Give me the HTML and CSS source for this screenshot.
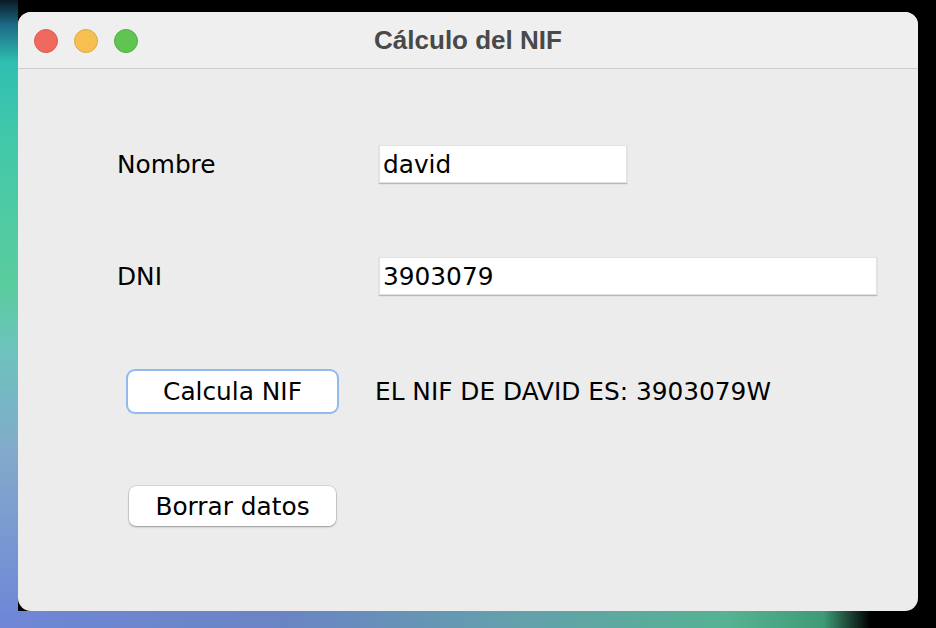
FILE: index.html
```html
<!DOCTYPE html>
<html lang="es">
<head>
<meta charset="utf-8">
<title>Cálculo del NIF</title>
<link rel="stylesheet" href="styles.css">
</head>
<body>
<div class="desktop">
  <div class="window">
    <div class="titlebar">
      <div class="lights">
        <span class="light red"></span>
        <span class="light yellow"></span>
        <span class="light green"></span>
      </div>
      <div class="title">Cálculo del NIF</div>
    </div>
    <div class="content">
      <div class="row row-nombre">
        <label class="label">Nombre</label>
        <div class="field field-short">david</div>
      </div>
      <div class="row row-dni">
        <label class="label">DNI</label>
        <div class="field field-long">3903079</div>
      </div>
      <div class="row row-calc">
        <button class="btn btn-focus">Calcula NIF</button>
        <span class="result">EL NIF DE DAVID ES: 3903079W</span>
      </div>
      <div class="row row-clear">
        <button class="btn">Borrar datos</button>
      </div>
    </div>
  </div>
</div>
</body>
</html>
```

FILE: styles.css
```css
html, body {
  margin: 0;
  padding: 0;
}
body {
  width: 936px;
  height: 628px;
  overflow: hidden;
  background: #000;
}
.desktop {
  width: 936px;
  height: 628px;
  box-sizing: border-box;
  padding: 12px 18px 17px 18px;
  background:
    linear-gradient(90deg, #6f87d6 0%, #6a84c4 30%, #64a0ac 55%, #55b392 78%, #3f9a76 88%, #000 93%) bottom / 100% 17px no-repeat,
    linear-gradient(180deg, #0a1a25 0%, #1c6a86 4%, #2fc0b2 10%, #42c8aa 22%, #5acc9e 45%, #6cc4bc 55%, #82aacb 72%, #6f85d8 100%) left / 18px 100% no-repeat,
    #000;
}
.window {
  width: 900px;
  height: 599px;
  background: #ececec;
  border-radius: 13px;
  overflow: hidden;
  display: flex;
  flex-direction: column;
}
.titlebar {
  height: 56px;
  flex: none;
  background: #efeff0;
  border-bottom: 1px solid #cfcfcf;
  display: flex;
  align-items: center;
  position: relative;
}
.lights {
  display: flex;
  gap: 16px;
  padding-left: 16px;
  padding-top: 2px;
}
.light {
  width: 24px;
  height: 24px;
  border-radius: 50%;
  box-sizing: border-box;
}
.red { background: #ee6a5f; border: 1px solid #dd5a50; }
.yellow { background: #f6bf4f; border: 1px solid #e0a93e; }
.green { background: #60c453; border: 1px solid #4faf43; }
.title {
  position: absolute;
  left: 0;
  right: 0;
  top: 0;
  bottom: 0;
  display: flex;
  align-items: center;
  justify-content: center;
  font-family: "Liberation Sans", Arial, sans-serif;
  font-weight: 700;
  font-size: 26px;
  color: #494949;
  padding-top: 1px;
}
.content {
  padding-top: 76px;
  padding-left: 99px;
  font-family: "DejaVu Sans", sans-serif;
  font-size: 24.8px;
  color: #000;
}
.row {
  display: flex;
  align-items: center;
}
.label {
  width: 262px;
}
.field {
  height: 38px;
  box-sizing: border-box;
  background: #fff;
  border: 1px solid #e2e2e2;
  box-shadow: 0 1px 1px rgba(0,0,0,0.22);
  padding: 2px 3px 0 3px;
  line-height: 34px;
}
.field-short { width: 248px; }
.field-long { width: 498px; }
.row-dni { margin-top: 74px; }
.row-calc { margin-top: 76px; padding-left: 11px; }
.row-clear { margin-top: 74px; padding-left: 12px; }
.btn {
  font-family: "DejaVu Sans", sans-serif;
  font-size: 24.8px;
  color: #000;
  background: #fff;
  border: none;
  border-radius: 7px;
  box-shadow: 0 0 0 0.5px rgba(0,0,0,0.18), 0 1px 2px rgba(0,0,0,0.3);
  width: 207px;
  height: 40px;
  padding: 0;
  margin: 0;
}
.btn-focus {
  width: 209px;
  height: 41px;
  box-shadow: 0 0 0 2px #93baee, 0 1px 2px rgba(0,0,0,0.2);
}
.result {
  margin-left: 38px;
}
```
